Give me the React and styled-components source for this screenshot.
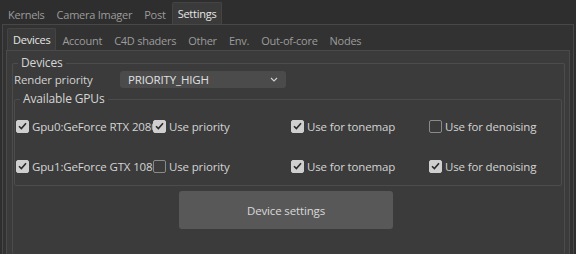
import React from "react";
import styled, { createGlobalStyle } from "styled-components";

const Global = createGlobalStyle`
  html, body {
    margin: 0;
    padding: 0;
    background: #2e2e2e;
    font-family: "Open Sans", "Noto Sans", sans-serif;
    font-size: 11px;
    letter-spacing: -0.15px;
    color: #d2d2d2;
  }
`;

const Window = styled.div`
  width: 576px;
  height: 254px;
  overflow: hidden;
  display: flex;
  flex-direction: column;
`;

// top tabs
const TopTabs = styled.div`
  height: 24px;
  display: flex;
  align-items: flex-end;
  padding-left: 2px;
`;

const Tab = styled.div`
  height: ${(p) => (p.$active ? 21 : 20)}px;
  padding: 0 5px;
  display: flex;
  align-items: center;
  font-size: 11px;
  letter-spacing: -0.25px;
  color: ${(p) => (p.$active ? "#e6e6e6" : "#9c9c9c")};
  background: ${(p) => (p.$active ? "#3a3a3a" : "transparent")};
  border: 1px solid ${(p) => (p.$active ? "#444" : "transparent")};
  border-bottom: none;
  border-radius: 2px 2px 0 0;
  white-space: nowrap;
`;

const Outer = styled.div`
  flex: 1;
  margin: 0 2px;
  border: 1px solid #474747;
  border-bottom: none;
  background: #323232;
  display: flex;
  flex-direction: column;
`;

const SubTabs = styled.div`
  height: 25px;
  display: flex;
  align-items: flex-end;
  padding-left: 4px;
`;

const Inner = styled.div`
  flex: 1;
  margin: 0 3px;
  border: 1px solid #4a4a4a;
  border-bottom: none;
  background: #3b3b3b;
  padding: 4px 4px 0 5px;
  display: flex;
  flex-direction: column;
`;

const Group = styled.fieldset`
  margin: ${(p) => (p.$open ? "0" : "3px 0 0 0")};
  padding: 0 2px 0 1px;
  border: 1px solid #4c4c4c;
  border-radius: 2px;
  min-width: 0;
  ${(p) => (p.$open ? "border-bottom: none; flex: 1;" : "")}
`;

const Legend = styled.legend`
  padding: 0 3px;
  margin-left: 4px;
  color: #d6d6d6;
  font-size: 12px;
  line-height: 16px;
`;

const Row = styled.div`
  display: flex;
  align-items: center;
  height: 17px;
`;

const Label = styled.div`
  width: 106px;
  color: #d2d2d2;
  font-size: 11.5px;
`;

const Combo = styled.div`
  width: 166px;
  height: 17px;
  box-sizing: border-box;
  background: #4b4b4b;
  border-radius: 3px;
  padding: 0 8px;
  display: flex;
  align-items: center;
  justify-content: space-between;
  color: #e0e0e0;
  font-size: 11.5px;
`;

const GpuGrid = styled.div`
  display: grid;
  grid-template-columns: 137px 138px 138px 1fr;
  grid-template-rows: 40px 28px;
  padding-top: 10px;
`;

const Cell = styled.label`
  display: flex;
  align-items: center;
  gap: 3px;
  overflow: hidden;
  white-space: nowrap;
  color: #d4d4d4;
  align-self: start;
  height: 18px;
  font-size: 11.5px;
`;

const Box = styled.span`
  flex: none;
  width: 13px;
  height: 13px;
  box-sizing: border-box;
  border-radius: 2px;
  background: ${(p) => (p.$on ? "#cfcfcf" : "#3b3b3b")};
  border: 1px solid ${(p) => (p.$on ? "#cfcfcf" : "#8a8a8a")};
  display: flex;
  align-items: center;
  justify-content: center;
`;

const ButtonRow = styled.div`
  display: flex;
  justify-content: center;
  padding-top: 5px;
  margin-left: -4px;
`;

const Button = styled.div`
  width: 214px;
  height: 38px;
  background: #585858;
  border-radius: 3px;
  display: flex;
  align-items: center;
  justify-content: center;
  color: #d8d8d8;
  font-size: 11.5px;
`;

const Check = () => (
  <svg width="9" height="8" viewBox="0 0 9 8">
    <path d="M1 4.2 L3.4 6.6 L8 1.2" fill="none" stroke="#2a2a2a" strokeWidth="1.6" />
  </svg>
);

const Chevron = () => (
  <svg width="8" height="5" viewBox="0 0 8 5">
    <path d="M1 1 L4 4 L7 1" fill="none" stroke="#d0d0d0" strokeWidth="1.1" />
  </svg>
);

const CheckItem = ({ on, children }) => (
  <Cell>
    <Box $on={on}>{on && <Check />}</Box>
    {children}
  </Cell>
);

const gpus = [
  { name: "Gpu0:GeForce RTX 2080 Ti", priority: true, tonemap: true, denoise: false },
  { name: "Gpu1:GeForce GTX 1080 Ti", priority: false, tonemap: true, denoise: true },
];

const App = () => (
  <Window>
    <Global />
    <TopTabs>
      <Tab>Kernels</Tab>
      <Tab>Camera Imager</Tab>
      <Tab>Post</Tab>
      <Tab $active>Settings</Tab>
    </TopTabs>
    <Outer>
      <SubTabs>
        <Tab $active>Devices</Tab>
        <Tab>Account</Tab>
        <Tab>C4D shaders</Tab>
        <Tab>Other</Tab>
        <Tab>Env.</Tab>
        <Tab>Out-of-core</Tab>
        <Tab>Nodes</Tab>
      </SubTabs>
      <Inner>
        <Group $open>
          <Legend>Devices</Legend>
          <Row>
            <Label>Render priority</Label>
            <Combo>
              PRIORITY_HIGH
              <Chevron />
            </Combo>
          </Row>
          <Group>
            <Legend>Available GPUs</Legend>
            <GpuGrid>
              {gpus.map((g) => (
                <React.Fragment key={g.name}>
                  <CheckItem on>{g.name}</CheckItem>
                  <CheckItem on={g.priority}>Use priority</CheckItem>
                  <CheckItem on={g.tonemap}>Use for tonemap</CheckItem>
                  <CheckItem on={g.denoise}>Use for denoising</CheckItem>
                </React.Fragment>
              ))}
            </GpuGrid>
          </Group>
          <ButtonRow>
            <Button>Device settings</Button>
          </ButtonRow>
        </Group>
      </Inner>
    </Outer>
  </Window>
);

export default App;
